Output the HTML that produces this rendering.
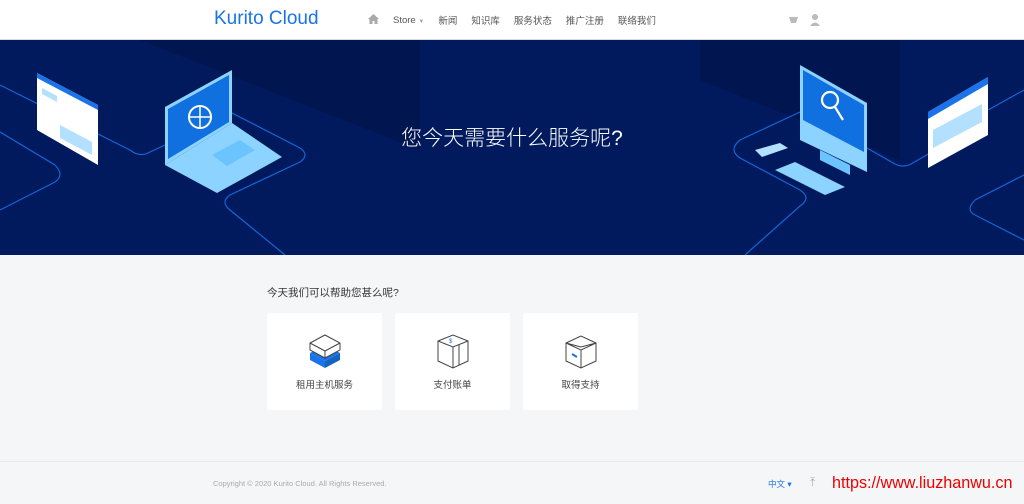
<!DOCTYPE html>
<html><head><meta charset="utf-8"><style>
*{margin:0;padding:0;box-sizing:border-box}
body{width:1024px;height:504px;overflow:hidden;background:#f5f6f8;font-family:"Liberation Sans","Noto Sans CJK SC",sans-serif}
.hdr{height:40px;background:#fff;border-bottom:1px solid #d8dbe3;position:relative}
.logo{position:absolute;left:214px;top:8px;font-size:19px;color:#1a73e8}
.nav{position:absolute;left:368px;top:13px;font-size:9.5px;color:#555;display:flex;align-items:center}
.nav span{margin-right:14px}
.ban{position:absolute;top:40px;left:0;width:1024px;height:215px;background:#011a5d;overflow:hidden}
.ban h1{position:absolute;left:0;right:0;top:82px;text-align:center;color:#fff;font-weight:300;font-size:21px}
.q{position:absolute;left:267px;top:285px;font-size:10.5px;color:#333}
.card{position:absolute;top:313px;width:115px;height:97px;background:#fff;border-radius:2px;text-align:center;font-size:9.5px;color:#444}
.card svg{position:absolute;left:40px;top:20px}
.card div{position:absolute;top:64px;width:100%}
.ft{position:absolute;top:461px;left:0;width:1024px;height:43px;border-top:1px solid #e8eaee}
</style></head><body>
<div class="hdr"><div class="logo">Kurito Cloud</div>
<div class="nav"><span><svg width="11" height="10"><path d="M5.5 0L0 5h1.5v5h3V7h2v3h3V5H11z" fill="#aaa"/></svg></span><span>Store <small style="color:#aaa;font-size:6px">▼</small></span><span>新闻</span><span>知识库</span><span>服务状态</span><span>推广注册</span><span>联络我们</span></div>
<svg style="position:absolute;left:788px;top:13px" width="34" height="14"><path d="M1 4h9l-2 6H3z" fill="#bbb"/><circle cx="27" cy="4" r="3" fill="#bbb"/><path d="M22 13q5-7 10 0z" fill="#bbb"/></svg>
</div>
<div class="ban">
<svg width="1024" height="215">
<polygon points="140,0 420,0 420,110 140,0" fill="#011650"/>
<polygon points="700,0 900,0 900,120 700,40" fill="#011650"/>
<g fill="none" stroke="#1565d8" stroke-width="1.2">
<path d="M0 45 L130 110 Q140 118 150 112 L165 105"/>
<path d="M0 92 L55 125 Q65 135 55 142 L0 170"/>
<path d="M230 72 L300 108 Q310 115 300 122 L230 155 Q220 162 230 170 L285 215"/>
<path d="M800 72 L740 100 Q728 110 740 118 L800 150 Q812 158 800 166 L745 215"/>
<path d="M867 108 L895 124 Q903 128 911 124 L930 113"/>
<path d="M1024 50 L988 70"/>
<path d="M1024 135 L975 160 Q965 170 975 175 L1024 200"/>
</g>
<polygon points="37,33 98,65 98,125 37,90" fill="#fff"/><polygon points="37,33 98,65 98,70 37,38" fill="#1a73e8"/>
<polygon points="42,48 57,56 57,62 42,54" fill="#b3e0ff"/>
<polygon points="60,85 92,102 92,115 60,98" fill="#b3e0ff"/>
<polygon points="165,67 232,30 232,83 165,125" fill="#8dd3ff"/><polygon points="168,69 229,35 229,82 168,119" fill="#1170e0"/>
<circle cx="200" cy="77" r="11" fill="none" stroke="#fff" stroke-width="2"/>
<path d="M189 77h22M200 66v22" stroke="#fff" stroke-width="1.5"/>
<polygon points="165,125 232,83 282,117 217,153" fill="#8dd3ff"/>
<polygon points="212,115 240,100 255,110 227,126" fill="#6cc4ff"/>
<polygon points="820,110 850,125 850,135 820,120" fill="#6cc4ff"/>
<polygon points="800,25 867,63 867,132 800,100" fill="#8dd3ff"/><polygon points="803,30 864,65 864,112 803,80" fill="#1170e0"/>
<circle cx="830" cy="60" r="8" fill="none" stroke="#fff" stroke-width="2.2"/><path d="M835 67 L843 80" stroke="#fff" stroke-width="2.2"/>
<polygon points="775,130 795,122 845,147 825,155" fill="#8dd3ff"/>
<polygon points="755,110 780,103 788,108 762,117" fill="#b3e0ff"/>
<polygon points="928,72 988,37 988,95 928,128" fill="#fff"/><polygon points="928,72 988,37 988,44 928,79" fill="#1a73e8"/>
<polygon points="933,90 982,64 982,82 933,108" fill="#b3e0ff"/>
</svg>
<h1>您今天需要什么服务呢?</h1></div>
<div class="q">今天我们可以帮助您甚么呢?</div>
<div class="card" style="left:267px"><svg width="36" height="36"><polygon points="3,20 18,12 33,20 18,28" fill="#1a73e8"/><polygon points="3,20 18,28 18,35 3,27" fill="#1a73e8"/><polygon points="33,20 18,28 18,35 33,27" fill="#1565c0"/><polygon points="3,10 18,2 33,10 33,17 18,25 3,17" fill="#fff" stroke="#444"/><path d="M3 10 L18 18 L33 10 M18 18 V25" stroke="#444" fill="none"/></svg><div>租用主机服务</div></div>
<div class="card" style="left:395px"><svg width="36" height="36"><polygon points="3,8 18,2 33,8 33,28 18,35 3,28" fill="#fff" stroke="#444"/><path d="M3 8 L18 14 L33 8 M18 14 V35 M24 11 V32" stroke="#444" fill="none"/><text x="14" y="10" font-size="6" fill="#1a73e8">$</text></svg><div>支付账单</div></div>
<div class="card" style="left:523px"><svg width="36" height="36"><polygon points="3,10 18,3 33,10 33,28 18,35 3,28" fill="#fff" stroke="#444"/><path d="M3 10 L18 17 L33 10 M18 17 V35 M3 10 L18 14 L33 10" stroke="#444" fill="none"/><path d="M9 21 L14 24" stroke="#1a73e8" stroke-width="2"/></svg><div>取得支持</div></div>
<div class="ft">
<div style="position:absolute;left:213px;top:17px;font-size:7.5px;color:#aaa">Copyright © 2020 Kurito Cloud. All Rights Reserved.</div>
<div style="position:absolute;left:768px;top:16px;font-size:8.5px;color:#1a73e8">中文 ▾</div>
<div style="position:absolute;left:810px;top:13px;font-size:12px;color:#aaa">⤒</div>
<div style="position:absolute;left:832px;top:11px;font-size:17px;color:#e00;transform:scaleX(0.95);transform-origin:left top;white-space:nowrap">https://www.liuzhanwu.cn</div>
</div>
</body></html>
